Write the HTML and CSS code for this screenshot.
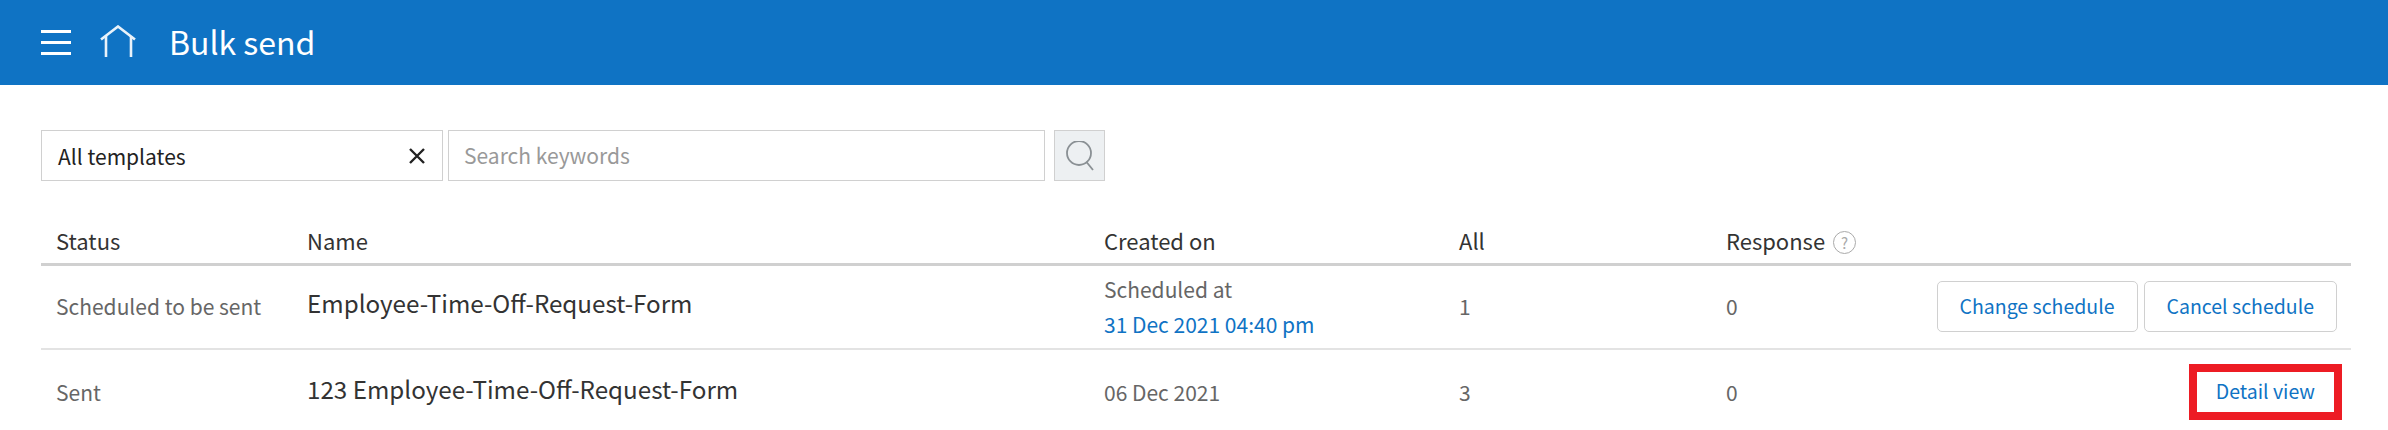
FILE: index.html
```html
<!DOCTYPE html>
<html lang="en">
<head>
<meta charset="UTF-8" />
<meta name="viewport" content="width=device-width, initial-scale=1" />
<title>Bulk send</title>
<link rel="stylesheet" href="styles.css">
</head>
<body>
<header class="topbar">
  <button class="menu-btn" type="button" aria-label="Menu"><span></span><span></span><span></span></button>
  <svg class="home-icon" width="36" height="32" viewBox="0 0 36 32" fill="none" stroke="#e8f2fa" stroke-width="2.6">
    <path d="M1 14.5 18 1.5 35 14.5" />
    <path d="M6 11V32M31 11V32" />
  </svg>
  <h1>Bulk send</h1>
</header>

<main class="content">
  <form class="filters">
    <div class="template-select">
      <span>All templates</span>
      <svg width="18" height="18" viewBox="0 0 18 18" stroke="#222" stroke-width="2.4"><path d="M2 2 16 16M16 2 2 16" /></svg>
    </div>
    <input class="search-input" type="text" placeholder="Search keywords" />
    <button class="search-btn" type="button" aria-label="Search">
      <svg width="30" height="30" viewBox="0 0 30 30" fill="none" stroke="#8a9094" stroke-width="1.8">
        <circle cx="14" cy="12" r="12" />
        <path d="M21.5 21 28 29" />
      </svg>
    </button>
  </form>

  <table class="send-table">
    <thead>
      <tr>
        <th class="col-status">Status</th>
        <th class="col-name">Name</th>
        <th class="col-created">Created on</th>
        <th class="col-all">All</th>
        <th class="col-response">Response <span class="help">?</span></th>
        <th></th>
      </tr>
    </thead>
    <tbody>
      <tr>
        <td>Scheduled to be sent</td>
        <td class="name">Employee-Time-Off-Request-Form</td>
        <td>Scheduled at<br><a href="#">31 Dec 2021 04:40 pm</a></td>
        <td>1</td>
        <td>0</td>
        <td class="actions">
          <a class="btn" href="#">Change schedule</a>
          <a class="btn" href="#">Cancel schedule</a>
        </td>
      </tr>
      <tr>
        <td>Sent</td>
        <td class="name">123 Employee-Time-Off-Request-Form</td>
        <td>06 Dec 2021</td>
        <td>3</td>
        <td>0</td>
        <td class="actions">
          <a class="btn btn-marked" href="#">Detail view</a>
        </td>
      </tr>
    </tbody>
  </table>
</main>
</body>
</html>
```

FILE: styles.css
```css
* { box-sizing: border-box; }
html, body { margin: 0; height: 430px; overflow: hidden; }
body { font-family: "Noto Sans CJK JP", "Open Sans", sans-serif; background: #fff; color: #666; font-size: 21px; }
a { color: #0f73c4; text-decoration: none; }

.topbar { display: flex; align-items: center; height: 85px; padding-left: 41px; background: #0f73c4; color: #fff; }
.menu-btn { display: flex; flex-direction: column; gap: 8px; width: 30px; padding: 0; border: 0; background: none; margin-right: 29px; }
.menu-btn span { display: block; height: 3px; background: #fff; }
.home-icon { margin-right: 33px; margin-top: -4px; }
.topbar h1 { margin: 0 0 4px; font-size: 32px; font-weight: 400; line-height: 1; }

.content { padding: 45px 37px 0 41px; }
.filters { display: flex; height: 51px; margin-bottom: 41px; }
.template-select { display: flex; align-items: center; justify-content: space-between; width: 402px; padding: 0 16px; border: 1px solid #d0d0d0; color: #222; font-size: 21px; }
.search-input { width: 597px; margin-left: 5px; padding: 0 15px 2px; border: 1px solid #d0d0d0; font: inherit; font-size: 21px; outline: none; }
.search-input::placeholder { color: #999; }
.search-btn { display: flex; align-items: center; justify-content: center; width: 51px; margin-left: 9px; padding: 0; border: 1px solid #d0d0d0; background: #edf0f2; }

.send-table { width: 100%; border-collapse: collapse; table-layout: fixed; }
.send-table th { height: 42px; padding: 0 0 4px 16px; border-bottom: 3px solid #d0d0d0; color: #333; font-weight: 400; font-size: 22px; text-align: left; }
.send-table th:first-child, .send-table td:first-child { padding-left: 15px; }
.send-table td { height: 85px; padding: 0 0 0 16px; border-bottom: 2px solid #e3e3e3; line-height: 35px; }
.send-table tbody tr:last-child td { border-bottom: 0; }
.col-status { width: 251px; }
.col-name { width: 796px; }
.col-created { width: 355px; }
.col-all { width: 267px; }
.col-response { width: 200px; }
.send-table th.col-name, .send-table td.name { padding-left: 15px; }
.send-table td.name { padding-bottom: 8px; color: #333; font-size: 24.2px; }
.help { display: inline-block; width: 23px; height: 23px; margin-left: 3px; border: 1px solid #aaa; border-radius: 50%; color: #aaa; font-size: 15px; line-height: 21px; text-align: center; vertical-align: 1px; }

.send-table td.actions { padding: 0 14px 0 0; text-align: right; font-size: 0; white-space: nowrap; }
.btn { display: inline-block; height: 51px; margin-left: 6px; padding: 0 22px; border: 1px solid #d0d0d0; border-radius: 5px; font-size: 19.5px; line-height: 47px; }
.btn-marked { margin-right: -5px; padding: 0 19px; height: 56px; border: 8px solid #ed1c24; border-radius: 0; line-height: 37px; }
```
